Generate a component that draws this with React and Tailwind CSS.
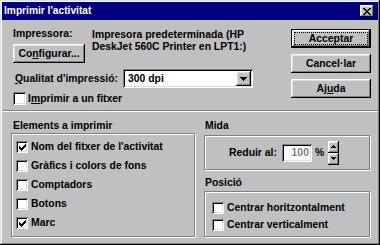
import React from "react";

const raised =
  "shadow-[inset_-1px_-1px_0_#000,inset_1px_1px_0_#fff,inset_-2px_-2px_0_#808080,inset_2px_2px_0_#dfdfdf]";
const sunken =
  "shadow-[inset_1px_1px_0_#808080,inset_-1px_-1px_0_#fff,inset_2px_2px_0_#000,inset_-2px_-2px_0_#dfdfdf]";
const etched = "border border-[#808080] shadow-[1px_1px_0_#fff,inset_1px_1px_0_#fff]";

// the classic 7x7 tick
const CheckMark = () => (
  <svg width="7" height="7" viewBox="0 0 7 7" shapeRendering="crispEdges">
    <rect x="6" y="0" width="1" height="1" />
    <rect x="5" y="1" width="2" height="1" />
    <rect x="0" y="2" width="1" height="1" />
    <rect x="4" y="2" width="3" height="1" />
    <rect x="0" y="3" width="2" height="1" />
    <rect x="3" y="3" width="3" height="1" />
    <rect x="0" y="4" width="5" height="1" />
    <rect x="1" y="5" width="3" height="1" />
    <rect x="2" y="6" width="1" height="1" />
  </svg>
);

const Check = ({ checked, label }) => (
  <div className="flex items-center gap-[3px] h-[12px]">
    <span className={`w-[12px] h-[12px] bg-white ${sunken} flex items-center justify-center shrink-0`}>
      {checked && <CheckMark />}
    </span>
    <span className="leading-[12px] whitespace-nowrap">{label}</span>
  </div>
);

const Button = ({ children, className = "", isDefault }) => (
  <div
    className={`relative flex items-center justify-center bg-[#c0c0c0] ${
      isDefault ? "border border-black" : ""
    } ${className}`}
  >
    <div className={`absolute inset-0 ${raised}`} />
    {isDefault && <div className="absolute inset-[2px] border border-dotted border-black" />}
    <span className="relative leading-[12px]">{children}</span>
  </div>
);

const Tri = ({ up }) => (
  <svg width="5" height="3" viewBox="0 0 5 3" shapeRendering="crispEdges">
    {up ? (
      <>
        <rect x="2" y="0" width="1" height="1" />
        <rect x="1" y="1" width="3" height="1" />
        <rect x="0" y="2" width="5" height="1" />
      </>
    ) : (
      <>
        <rect x="0" y="0" width="5" height="1" />
        <rect x="1" y="1" width="3" height="1" />
        <rect x="2" y="2" width="1" height="1" />
      </>
    )}
  </svg>
);

export default function App() {
  return (
    <div
      className={`w-[380px] h-[245px] bg-[#c0c0c0] p-[2px] flex flex-col text-black font-bold text-[10.4px] font-['Liberation_Sans',Arial,sans-serif] shadow-[inset_-1px_-1px_0_#000,inset_1px_1px_0_#dfdfdf,inset_-2px_-2px_0_#808080,inset_2px_2px_0_#fff]`}
    >
      {/* title bar */}
      <div className="h-[18px] bg-[#000080] flex items-center pl-[2px] pr-[4px]">
        <span className="text-white text-[10.2px] leading-[12px]">Imprimir l'activitat</span>
        <div className={`ml-auto w-[14px] h-[12px] bg-[#c0c0c0] ${raised} flex items-center justify-center`}>
          <svg width="8" height="7" viewBox="0 0 8 7" shapeRendering="crispEdges">
            <path d="M0 0h2v1h1v1h2V1h1V0h2v1H7v1H6v1H5v1h1v1h1v1h1v1H6V6H5V5H3v1H2v1H0V6h1V5h1V4h1V3H2V2H1V1H0z" />
          </svg>
        </div>
      </div>

      {/* top part */}
      <div className="flex h-[90px]">
        <div className="pl-[11px] pt-[8px] flex flex-col">
          <div className="flex">
            <div className="w-[79px] flex flex-col items-start">
              <span className="leading-[12px]">Impressora:</span>
              <Button className="mt-[4px] w-[72px] h-[19px]">
                Co<u>n</u>figurar...
              </Button>
            </div>
            <div className="leading-[12px] mt-[1px]">
              Impresora predeterminada (HP
              <br />
              DeskJet 560C Printer en LPT1:)
            </div>
          </div>
          <div className="flex items-center mt-[6px]">
            <span className="ml-[2px] w-[108px] leading-[12px]">
              <u>Q</u>ualitat d'impressió:
            </span>
            <div className={`w-[130px] h-[19px] bg-white ${sunken} flex items-center pl-[5px] pr-[2px]`}>
              <span className="leading-[12px]">300 dpi</span>
              <div className={`ml-auto w-[15px] h-[15px] bg-[#c0c0c0] ${raised} flex items-center justify-center`}>
                <svg width="7" height="4" viewBox="0 0 7 4" shapeRendering="crispEdges">
                  <path d="M0 0h7v1H6v1H5v1H4v1H3V3H2V2H1V1H0z" />
                </svg>
              </div>
            </div>
          </div>
          <div className="mt-[4px]">
            <div className="flex items-center gap-[2px] h-[13px]">
              <span className={`w-[13px] h-[13px] bg-white ${sunken} shrink-0`} />
              <span className="leading-[12px]">
                I<u>m</u>primir a un fitxer
              </span>
            </div>
          </div>
        </div>

        <div className="ml-auto mr-[7px] mt-[9px] flex flex-col gap-[6px]">
          <Button isDefault className="w-[80px] h-[19px]">
            Acceptar
          </Button>
          <Button className="w-[80px] h-[19px]">Cancel·lar</Button>
          <Button className="w-[80px] h-[19px]">
            Aj<u>u</u>da
          </Button>
        </div>
      </div>

      <div className="h-[1px] bg-[#808080]" />
      <div className="h-[1px] bg-white" />

      {/* bottom part */}
      <div className="flex pl-[9px] pt-[8px]">
        <div className="w-[184px] flex flex-col">
          <span className="pl-[2px] leading-[12px]">Elements a imprimir</span>
          <div className={`mt-[1px] h-[104px] ${etched} pl-[4px] pt-[7px] flex flex-col gap-[7px]`}>
            <Check checked label="Nom del fitxer de l'activitat" />
            <Check label="Gràfics i colors de fons" />
            <Check label="Comptadors" />
            <Check label="Botons" />
            <Check checked label="Marc" />
          </div>
        </div>

        <div className="ml-[9px] w-[166px] flex flex-col">
          <span className="pl-[1px] leading-[12px]">Mida</span>
          <div className={`mt-[3px] h-[35px] ${etched} flex items-center pl-[24px]`}>
            <span className="leading-[12px]">Reduir al:</span>
            <div className={`ml-[5px] w-[30px] h-[18px] bg-white ${sunken} flex items-center justify-end pr-[3px]`}>
              <span className="leading-[12px] text-[#808080]">100</span>
            </div>
            <span className="ml-[3px] leading-[12px]">%</span>
            <div className="ml-[4px] flex flex-col">
              <div className={`w-[11px] h-[12px] bg-[#c0c0c0] ${raised} flex items-center justify-center`}>
                <Tri up />
              </div>
              <div className={`w-[11px] h-[12px] bg-[#c0c0c0] ${raised} flex items-center justify-center`}>
                <Tri />
              </div>
            </div>
          </div>

          <span className="mt-[7px] pl-[1px] leading-[12px]">Posició</span>
          <div className={`mt-[2px] h-[46px] ${etched} pl-[7px] pt-[10px] flex flex-col gap-[5px]`}>
            <Check label="Centrar horitzontalment" />
            <Check label="Centrar verticalment" />
          </div>
        </div>
      </div>
    </div>
  );
}
